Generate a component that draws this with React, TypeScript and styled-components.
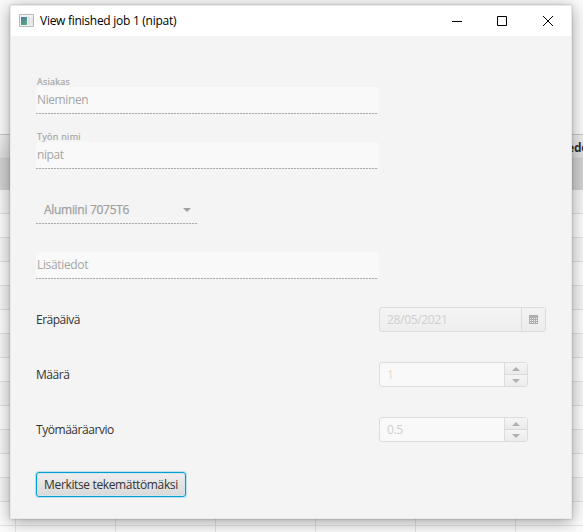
import React from "react";
import styled, { createGlobalStyle } from "styled-components";

const GlobalStyle = createGlobalStyle`
  * { box-sizing: border-box; }
  body { margin: 0; overflow: hidden; }
`;

const Desktop = styled.div`
  position: relative;
  width: 583px;
  height: 532px;
  overflow: hidden;
  background: #fbfbfb;
  font: 12px/16px "Open Sans", "Noto Sans", sans-serif;
  color: #333;
`;

const Backdrop = styled.div`
  padding-top: 134px;
`;

const TableHeader = styled.div`
  height: 25px;
  display: flex;
  align-items: center;
  justify-content: flex-end;
  border-top: 1px solid #c8c8c8;
  border-bottom: 1px solid #cfcfcf;
  background: linear-gradient(#f0f0f0, #dedede);
  font-weight: 700;
  letter-spacing: -0.2px;
  padding-top: 2px;
`;

const HeaderText = styled.span`
  width: 16px;
  white-space: nowrap;
`;

const SelectedRow = styled.div`
  height: 31px;
  background: #d3d3d3;
`;

const TableRow = styled.div<{ $odd: boolean }>`
  height: 24px;
  border-bottom: 1px solid #e1e1e1;
  background: ${(p) => (p.$odd ? "#fdfdfd" : "#f6f6f6")};
`;

const EmptyRow = styled.div`
  height: 24px;
  border-bottom: 1px solid #e6e6e6;
  background: repeating-linear-gradient(90deg, transparent 0 15px, #e3e3e3 15px 16px, transparent 16px 100px), #fcfcfc;
`;

const Window = styled.main`
  position: absolute;
  left: 10px;
  top: 5px;
  width: 562px;
  height: 514px;
  border: 1px solid #e9e9e9;
  background: #f4f4f4;
  box-shadow: 0 0 2px rgba(0, 0, 0, 0.24), 0 3px 16px rgba(0, 0, 0, 0.36);
`;

const TitleBar = styled.header`
  display: flex;
  align-items: center;
  height: 30px;
  padding-left: 8px;
  background: #fff;
  color: #000;
`;

const Title = styled.span`
  flex: 1;
  padding-left: 5px;
  letter-spacing: -0.27px;
`;

const WindowButton = styled.span`
  display: grid;
  place-items: center;
  width: 45px;
  height: 30px;
  padding-bottom: 1px;
  &:last-child { width: 47px; padding-left: 1px; }
`;

const Form = styled.div`
  padding: 24px 25px 0;
`;

const Row = styled.div<{ $gap?: number }>`
  display: flex;
  align-items: flex-end;
  height: 55px;
  padding-bottom: ${(p) => p.$gap ?? 3}px;
`;

const Field = styled.div`
  width: 343px;
  color: #a6a6a6;
`;

const FieldLabel = styled.div<{ $spacing: number }>`
  height: 11px;
  padding-left: 1px;
  font-size: 9px;
  line-height: 12px;
  -webkit-text-stroke: 0.2px currentColor;
  letter-spacing: ${(p) => p.$spacing}px;
`;

const Underline = styled.div<{ $width: number }>`
  width: ${(p) => p.$width}px;
  height: 1px;
  background: repeating-linear-gradient(90deg, #adadad 0 2px, #e4e4e4 2px 3px);
`;

const FieldValue = styled.div<{ $spacing: number }>`
  height: 26px;
  padding: 5px 0 0 1px;
  border-radius: 4px;
  background: #f9f9f9;
  letter-spacing: ${(p) => p.$spacing}px;
`;

const Combo = styled.div`
  color: #a0a0a0;
`;

const ComboValue = styled.div`
  display: flex;
  align-items: center;
  justify-content: space-between;
  width: 162px;
  height: 26px;
  padding: 0 7px 0 8px;
  -webkit-text-stroke: 0.25px currentColor;
  letter-spacing: -0.3px;
`;

const Caption = styled.label<{ $spacing: number }>`
  width: 343px;
  height: 25px;
  line-height: 25px;
  letter-spacing: ${(p) => p.$spacing}px;
`;

const InputFrame = styled.div<{ $width: number; $flat?: boolean }>`
  display: flex;
  width: ${(p) => p.$width}px;
  height: 25px;
  border: 1px solid #dcdcdc;
  border-radius: 3px;
  background: ${(p) => (p.$flat ? "linear-gradient(#f4f4f4, #eeeeee)" : "#f9f9f9")};
  color: #d3d3d3;
`;

const InputText = styled.span<{ $warm?: boolean }>`
  flex: 1;
  padding-left: 7px;
  line-height: 24px;
  letter-spacing: -0.32px;
  color: ${(p) => (p.$warm ? "#e0d8d0" : "#cfcfcf")};
`;

const CalendarButton = styled.span`
  width: 24px;
  border-left: 1px solid #dcdcdc;
  display: grid;
  place-items: center;
  background: linear-gradient(#f3f3f3, #ececec);
  border-radius: 0 2px 2px 0;
`;

const Stepper = styled.span`
  display: grid;
  grid-template-rows: 11px 12px;
  width: 23px;
  border-left: 1px solid #dcdcdc;
`;

const StepButton = styled.span`
  display: grid;
  place-items: center;
  background: linear-gradient(#f5f5f5, #ebebeb);
  & + & { border-top: 1px solid #d8d8d8; }
`;

const ActionButton = styled.button`
  width: 150px;
  height: 25px;
  padding: 0;
  border: 1px solid #039ed3;
  border-radius: 3px;
  background: linear-gradient(#eeeeee, #d9d9d9);
  box-shadow: 0 0 0 1px #b9e0ec, inset 0 0 0 1px #d2e6ec;
  font: inherit;
  color: #333;
  letter-spacing: -0.36px;
`;

const AppIcon = () => (
  <svg width="16" height="14" viewBox="0 0 16 14">
    <defs>
      <linearGradient id="screen" x1="0" y1="0" x2="0.7" y2="1">
        <stop offset="0.1" stopColor="#4b78a8" />
        <stop offset="1" stopColor="#58ac74" />
      </linearGradient>
    </defs>
    <path d="M.5.5h14v12H.5z" fill="#f4f4f4" stroke="#b4babf" />
    <path d="M2 3h6v8H2z" fill="url(#screen)" />
    <path d="M9 3h2v8H9z" fill="#d9dfe3" />
    <path d="M12 3h2v8h-2z" fill="#e4e4e4" />
  </svg>
);

const Triangle = ({ up, dark }: { up?: boolean; dark?: boolean }) => (
  <svg width="8" height="4" viewBox="0 0 8 4">
    <path d={up ? "M0 4 4 0l4 4z" : "M0 0h8L4 4z"} fill={dark ? "#a0a0a0" : "#b0b0b0"} />
  </svg>
);

const CalendarIcon = () => (
  <svg width="9" height="9" viewBox="0 0 9 9" shapeRendering="crispEdges">
    <path d="M0 0h9v9H0z" fill="#adadad" />
    <path d="M1 3h1v1H1zm2 0h1v1H3zm2 0h1v1H5zm2 0h1v1H7zM1 5h1v1H1zm2 0h1v1H3zm2 0h1v1H5zm2 0h1v1H7zM1 7h1v1H1zm2 0h1v1H3zm2 0h1v1H5zm2 0h1v1H7z" fill="#f3f3f3" />
  </svg>
);

const TextField = ({ label, value, labelSpacing = 0, spacing }: {
  label?: string; value: string; labelSpacing?: number; spacing: number;
}) => (
  <Row $gap={1}>
    <Field>
      <FieldLabel $spacing={labelSpacing}>{label}</FieldLabel>
      <FieldValue $spacing={spacing}>{value}</FieldValue>
      <Underline $width={342} />
    </Field>
  </Row>
);

const Spinner = ({ value, warm }: { value: string; warm?: boolean }) => (
  <InputFrame $width={149}>
    <InputText $warm={warm}>{value}</InputText>
    <Stepper>
      <StepButton><Triangle up /></StepButton>
      <StepButton><Triangle /></StepButton>
    </Stepper>
  </InputFrame>
);

export default function App() {
  return (
    <Desktop>
      <GlobalStyle />
      <Backdrop>
        <TableHeader><HeaderText>edo</HeaderText></TableHeader>
        <SelectedRow />
        {Array.from({ length: 13 }, (_, i) => <TableRow key={i} $odd={i % 2 === 1} />)}
        <EmptyRow />
        <EmptyRow />
      </Backdrop>
      <Window>
        <TitleBar>
          <AppIcon />
          <Title>View finished job 1 (nipat)</Title>
          <WindowButton>
            <svg width="10" height="10"><path d="M0 5.5h10" stroke="#000" /></svg>
          </WindowButton>
          <WindowButton>
            <svg width="10" height="10"><path d="M.5.5h9v9h-9z" fill="none" stroke="#000" /></svg>
          </WindowButton>
          <WindowButton>
            <svg width="10" height="10"><path d="m0 0 10 10M10 0 0 10" stroke="#000" /></svg>
          </WindowButton>
        </TitleBar>
        <Form>
          <TextField label="Asiakas" value="Nieminen" labelSpacing={0.25} spacing={-0.4} />
          <TextField label="Työn nimi" value="nipat" labelSpacing={0.3} spacing={-0.4} />
          <Row $gap={1}>
            <Combo>
              <ComboValue>Alumiini 7075T6 <Triangle dark /></ComboValue>
              <Underline $width={162} />
            </Combo>
          </Row>
          <TextField value="Lisätiedot" spacing={-0.35} />
          <Row>
            <Caption $spacing={-0.5}>Eräpäivä</Caption>
            <InputFrame $width={167} $flat>
              <InputText>28/05/2021</InputText>
              <CalendarButton><CalendarIcon /></CalendarButton>
            </InputFrame>
          </Row>
          <Row>
            <Caption $spacing={-0.45}>Määrä</Caption>
            <Spinner value="1" warm />
          </Row>
          <Row>
            <Caption $spacing={-0.45}>Työmääräarvio</Caption>
            <Spinner value="0.5" />
          </Row>
          <Row>
            <ActionButton>Merkitse tekemättömäksi</ActionButton>
          </Row>
        </Form>
      </Window>
    </Desktop>
  );
}
